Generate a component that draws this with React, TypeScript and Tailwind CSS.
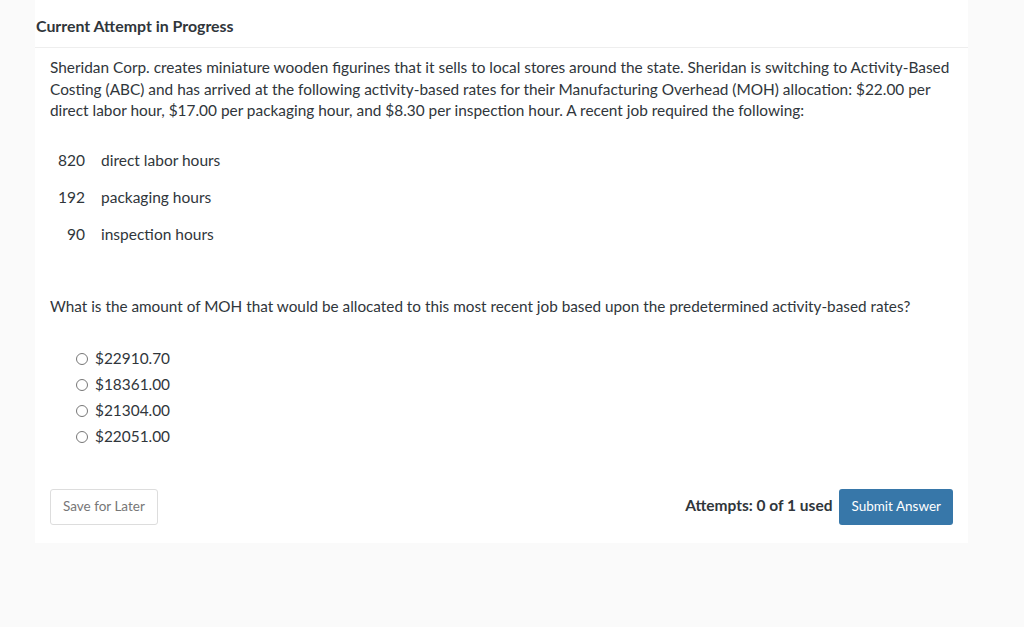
const options = ['$22910.70', '$18361.00', '$21304.00', '$22051.00'];

const activities = [
  { qty: 820, label: 'direct labor hours' },
  { qty: 192, label: 'packaging hours' },
  { qty: 90, label: 'inspection hours' },
];

export default function App() {
  return (
    <div
      className="min-h-[627px] w-full bg-[#fafafa] text-[#30363b] pl-[35px] pr-[56px]"
      style={{ fontFamily: 'Lato, "Open Sans", sans-serif' }}
    >
      <div className="bg-white w-[933px]">
        {/* Header */}
        <div className="h-[48px] pt-[5px] flex items-center pl-px border-b border-[#eeeeee]">
          <h2 className="text-[15.9px] font-bold">Current Attempt in Progress</h2>
        </div>

        <div className="px-[15px] pt-[9px] pb-[18px]">
          <p className="text-[15.4px] leading-[21.5px]">
            Sheridan Corp. creates miniature wooden figurines that it sells to local stores around the state. Sheridan
            is switching to Activity-Based Costing (ABC) and has arrived at the following activity-based rates for their
            Manufacturing Overhead (MOH) allocation: $22.00 per direct labor hour, $17.00 per packaging hour, and $8.30
            per inspection hour. A recent job required the following:
          </p>

          <div className="mt-[21px] flex flex-col">
            {activities.map((a) => (
              <div key={a.label} className="flex h-[37px] items-center text-[15.5px]">
                <span className="w-[35px] text-right">{a.qty}</span>
                <span className="ml-[16px]">{a.label}</span>
              </div>
            ))}
          </div>

          <p className="mt-[42px] text-[15.3px] leading-[21px]">
            What is the amount of MOH that would be allocated to this most recent job based upon the predetermined
            activity-based rates?
          </p>

          <div className="mt-[29px] pl-[26px] flex flex-col">
            {options.map((o) => (
              <label key={o} className="flex h-[26px] items-center text-[15.4px]">
                <span className="w-[12px] h-[12px] rounded-full border border-[#777] bg-white" />
                <span className="ml-[7px]">{o}</span>
              </label>
            ))}
          </div>

          <div className="mt-[39px] flex items-center">
            <button className="h-[36px] px-[12px] border border-[#dddddd] rounded-[3px] bg-white text-[13.5px] text-[#777]">
              Save for Later
            </button>
            <div className="ml-auto flex items-center">
              <span className="text-[15.5px] font-bold mb-[2px]">Attempts: 0 of 1 used</span>
              <button className="ml-[7px] h-[36px] px-[12px] rounded-[3px] bg-[#3777a9] text-[13.5px] text-white">
                Submit Answer
              </button>
            </div>
          </div>
        </div>
      </div>
    </div>
  );
}
